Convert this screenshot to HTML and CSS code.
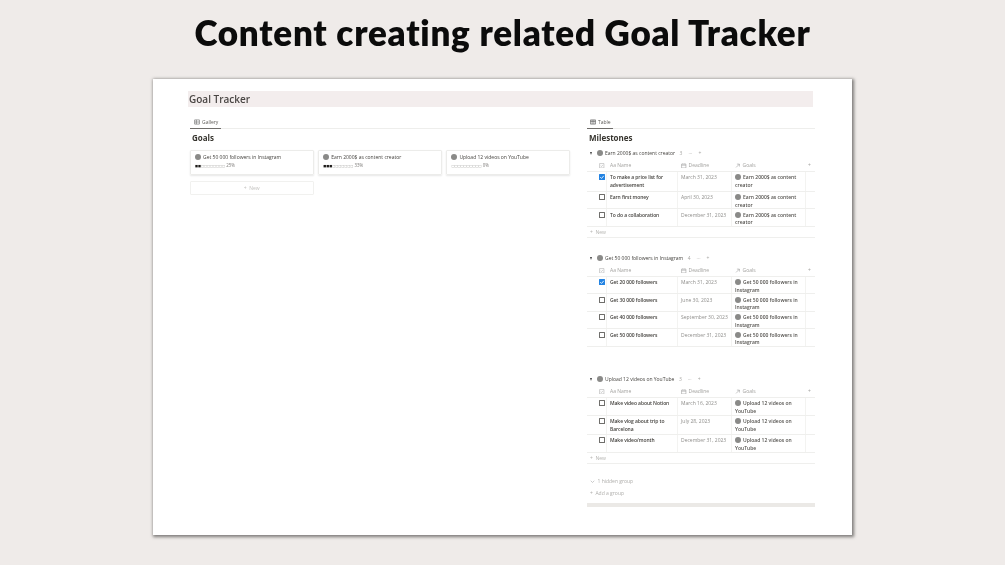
FILE: index.html
```html
<!DOCTYPE html>
<html lang="en">
<head>
<meta charset="utf-8">
<title>Goal Tracker</title>
<link rel="stylesheet" href="styles.css">
</head>
<body>
<h1 class="headline">Content creating related Goal Tracker</h1>
<main class="window">
  <div class="band">Goal Tracker</div>
  <div class="columns">
    <section class="left">
      <div class="tabs"><div class="tab tab-gallery">
        <svg class="ico" viewBox="0 0 10 10"><path d="M1 1.500h8v7H1zM1 5h8M4 1.500v7" fill="none" stroke="#666" stroke-width="1"/></svg>Gallery</div></div>
      <h2 class="view-title">Goals</h2>
      <div class="cards">
        <article class="card">
          <div class="card-name"><span class="dot"></span>Get 50 000 followers in Instagram</div>
          <div class="progress"><span class="dark">■■</span><span class="light">□□□□□□□□</span> 25%</div>
        </article>
        <article class="card">
          <div class="card-name"><span class="dot"></span>Earn 2000$ as content creator</div>
          <div class="progress"><span class="dark">■■■</span><span class="light">□□□□□□□</span> 33%</div>
        </article>
        <article class="card">
          <div class="card-name"><span class="dot"></span>Upload 12 videos on YouTube</div>
          <div class="progress"><span class="light">□□□□□□□□□□</span> 0%</div>
        </article>
        <div class="card-new">+ &nbsp;New</div>
      </div>
    </section>

    <section class="right">
      <div class="tabs"><div class="tab tab-table">
        <svg class="ico" viewBox="0 0 10 10"><path d="M.8 1.500h8.400v7H.8zM.8 4h8.400M3.500 1.500v7M6.500 1.500v7" fill="none" stroke="#555" stroke-width="1"/></svg>Table</div></div>
      <h2 class="view-title">Milestones</h2>

      <div class="group g1">
        <div class="group-head"><span class="tri"></span><span class="dot"></span><span class="gname">Earn 2000$ as content creator</span><span class="meta"><span>3</span><span>···</span><span>+</span></span></div>
        <div class="row head">
          <div class="c0"><svg class="chk-h" viewBox="0 0 10 10"><path d="M1 1h8v8H1zM3 5l1.500 1.500L7 3.500" fill="none" stroke="#aaa"/></svg></div>
          <div class="c1">Aa Name</div>
          <div class="c2"><svg class="ico-h" viewBox="0 0 10 10"><path d="M1 2h8v7H1zM1 4h8M3 1v1M7 1v1" fill="none" stroke="#999"/></svg>Deadline</div>
          <div class="c3"><svg class="ico-h" viewBox="0 0 10 10"><path d="M2 8l6-6M3.500 2H8v4.500" fill="none" stroke="#999"/></svg>Goals</div>
          <div class="c4 plus">+</div>
        </div>
        <div class="row tall">
          <div class="c0"><span class="box on"><svg viewBox="0 0 10 10"><path d="M2 5.200l2.200 2.200L8 3" fill="none" stroke="#fff" stroke-width="1.400"/></svg></span></div>
          <div class="c1 name">To make a price list for advertisement</div>
          <div class="c2 date">March 31, 2023</div>
          <div class="c3 goal"><span class="dot"></span>Earn 2000$ as content creator</div>
          <div class="c4"></div>
        </div>
        <div class="row">
          <div class="c0"><span class="box"></span></div>
          <div class="c1 name">Earn first money</div>
          <div class="c2 date">April 30, 2023</div>
          <div class="c3 goal"><span class="dot"></span>Earn 2000$ as content creator</div>
          <div class="c4"></div>
        </div>
        <div class="row">
          <div class="c0"><span class="box"></span></div>
          <div class="c1 name">To do a collaboration</div>
          <div class="c2 date">December 31, 2023</div>
          <div class="c3 goal"><span class="dot"></span>Earn 2000$ as content creator</div>
          <div class="c4"></div>
        </div>
        <div class="row-new">+ &nbsp;New</div>
      </div>

      <div class="group g2">
        <div class="group-head"><span class="tri"></span><span class="dot"></span><span class="gname">Get 50 000 followers in Instagram</span><span class="meta"><span>4</span><span>···</span><span>+</span></span></div>
        <div class="row head">
          <div class="c0"><svg class="chk-h" viewBox="0 0 10 10"><path d="M1 1h8v8H1zM3 5l1.500 1.500L7 3.500" fill="none" stroke="#aaa"/></svg></div>
          <div class="c1">Aa Name</div>
          <div class="c2"><svg class="ico-h" viewBox="0 0 10 10"><path d="M1 2h8v7H1zM1 4h8M3 1v1M7 1v1" fill="none" stroke="#999"/></svg>Deadline</div>
          <div class="c3"><svg class="ico-h" viewBox="0 0 10 10"><path d="M2 8l6-6M3.500 2H8v4.500" fill="none" stroke="#999"/></svg>Goals</div>
          <div class="c4 plus">+</div>
        </div>
        <div class="row">
          <div class="c0"><span class="box on"><svg viewBox="0 0 10 10"><path d="M2 5.200l2.200 2.200L8 3" fill="none" stroke="#fff" stroke-width="1.400"/></svg></span></div>
          <div class="c1 name">Get 20 000 followers</div>
          <div class="c2 date">March 31, 2023</div>
          <div class="c3 goal"><span class="dot"></span>Get 50 000 followers in Instagram</div>
          <div class="c4"></div>
        </div>
        <div class="row">
          <div class="c0"><span class="box"></span></div>
          <div class="c1 name">Get 30 000 followers</div>
          <div class="c2 date">June 30, 2023</div>
          <div class="c3 goal"><span class="dot"></span>Get 50 000 followers in Instagram</div>
          <div class="c4"></div>
        </div>
        <div class="row">
          <div class="c0"><span class="box"></span></div>
          <div class="c1 name">Get 40 000 followers</div>
          <div class="c2 date">September 30, 2023</div>
          <div class="c3 goal"><span class="dot"></span>Get 50 000 followers in Instagram</div>
          <div class="c4"></div>
        </div>
        <div class="row">
          <div class="c0"><span class="box"></span></div>
          <div class="c1 name">Get 50 000 followers</div>
          <div class="c2 date">December 31, 2023</div>
          <div class="c3 goal"><span class="dot"></span>Get 50 000 followers in Instagram</div>
          <div class="c4"></div>
        </div>
      </div>

      <div class="group g3">
        <div class="group-head"><span class="tri"></span><span class="dot"></span><span class="gname">Upload 12 videos on YouTube</span><span class="meta"><span>3</span><span>···</span><span>+</span></span></div>
        <div class="row head">
          <div class="c0"><svg class="chk-h" viewBox="0 0 10 10"><path d="M1 1h8v8H1zM3 5l1.500 1.500L7 3.500" fill="none" stroke="#aaa"/></svg></div>
          <div class="c1">Aa Name</div>
          <div class="c2"><svg class="ico-h" viewBox="0 0 10 10"><path d="M1 2h8v7H1zM1 4h8M3 1v1M7 1v1" fill="none" stroke="#999"/></svg>Deadline</div>
          <div class="c3"><svg class="ico-h" viewBox="0 0 10 10"><path d="M2 8l6-6M3.500 2H8v4.500" fill="none" stroke="#999"/></svg>Goals</div>
          <div class="c4 plus">+</div>
        </div>
        <div class="row">
          <div class="c0"><span class="box"></span></div>
          <div class="c1 name">Make video about Notion</div>
          <div class="c2 date">March 16, 2023</div>
          <div class="c3 goal"><span class="dot"></span>Upload 12 videos on YouTube</div>
          <div class="c4"></div>
        </div>
        <div class="row mid">
          <div class="c0"><span class="box"></span></div>
          <div class="c1 name">Make vlog about trip to Barcelona</div>
          <div class="c2 date">July 28, 2023</div>
          <div class="c3 goal"><span class="dot"></span>Upload 12 videos on YouTube</div>
          <div class="c4"></div>
        </div>
        <div class="row">
          <div class="c0"><span class="box"></span></div>
          <div class="c1 name">Make video/month</div>
          <div class="c2 date">December 31, 2023</div>
          <div class="c3 goal"><span class="dot"></span>Upload 12 videos on YouTube</div>
          <div class="c4"></div>
        </div>
        <div class="row-new short">+ &nbsp;New</div>
      </div>

      <div class="foot first"><svg class="chev" viewBox="0 0 10 10"><path d="M1.500 3.500L5 7l3.500-3.500" fill="none" stroke="#aaa" stroke-width="1.200"/></svg>1 hidden group</div>
      <div class="foot">+ &nbsp;Add a group</div>
      <div class="scrollbar"></div>
    </section>
  </div>
</main>
</body>
</html>
```

FILE: styles.css
```css
* { box-sizing: border-box; }
html, body { margin: 0; height: 100%; }
body {
  width: 1005px;
  height: 565px;
  overflow: hidden;
  background: #efebe9;
  font-family: "Open Sans", "Liberation Sans", sans-serif;
  color: #37352f;
}
.headline {
  margin: 0;
  height: 79px;
  padding-top: 10px;
  text-align: center;
  font-family: Lato, "Liberation Sans", sans-serif;
  font-size: 35px;
  line-height: 44px;
  font-weight: 800;
  letter-spacing: 0.75px;
  color: #0b0b0b;
  filter: blur(0.3px);
}
.window {
  width: 699px;
  height: 456px;
  margin-left: 153px;
  padding: 12px 37px 0 35px;
  background: #fff;
  box-shadow: 1px 1px 3px 1px #7d7b79;
  overflow: hidden;
}
.band {
  width: 625px;
  height: 16px;
  background: #f3eded;
  font-size: 10px;
  line-height: 17px;
  font-weight: 600;
  color: #4a4644;
  padding-left: 1px;
  filter: blur(0.3px);
}
.columns {
  display: flex;
  gap: 17px;
  padding-left: 2px;
  margin-top: 9px;
  filter: blur(0.4px);
}
.left { width: 380px; flex: none; }
.right { width: 228px; flex: none; }
.tabs {
  height: 13px;
  border-bottom: 1px solid #eeeeec;
}
.tab {
  height: 13px;
  border-bottom: 1px solid #6f6d6a;
  font-size: 5px;
  line-height: 11px;
  color: #5f5d59;
  display: flex;
  align-items: center;
}
.tab-gallery { width: 31px; padding-left: 4px; }
.tab-table { width: 26px; padding-left: 3px; }
.ico { width: 6px; height: 6px; margin-right: 2px; }
.view-title {
  margin: 3px 0 0 2px;
  font-size: 8px;
  line-height: 12px;
  font-weight: 700;
  color: #37352f;
}
.cards {
  display: grid;
  grid-template-columns: repeat(3, 123.500px);
  gap: 6px 4.700px;
  margin-top: 6px;
}
.card {
  height: 25px;
  border: 1px solid #ececea;
  border-radius: 1px;
  box-shadow: 0 1px 2px rgba(15, 15, 15, .10);
  padding: 2.500px 4px;
}
.card-name {
  display: flex;
  align-items: center;
  font-size: 5px;
  line-height: 7px;
  color: #45433f;
}
.dot {
  width: 6px;
  height: 6px;
  border-radius: 50%;
  background: #8a8a88;
  flex: none;
  display: inline-block;
}
.card-name .dot { margin-right: 2px; }
.progress {
  font-size: 4.400px;
  line-height: 7px;
  margin-top: 1.500px;
  color: #7d7b78;
  white-space: nowrap;
}
.progress span { font-family: "DejaVu Sans", sans-serif; font-size: 3.200px; }
.progress .dark { color: #1e1c1a; }
.progress .light { color: #9b9a97; }
.card-new {
  height: 14px;
  border: 1px solid #f1f1ef;
  border-radius: 1px;
  font-size: 5px;
  line-height: 12px;
  text-align: center;
  color: #c4c3c0;
}
.group-head {
  display: flex;
  align-items: center;
  height: 8px;
  font-size: 5px;
  line-height: 8px;
  color: #45433f;
  padding-left: 3px;
}
.tri {
  width: 0;
  height: 0;
  border-left: 1.500px solid transparent;
  border-right: 1.500px solid transparent;
  border-top: 3px solid #444;
  margin-right: 5px;
}
.group-head .dot { margin-right: 2px; }
.meta { display: flex; gap: 6px; margin-left: 4.500px; color: #a8a7a4; white-space: nowrap; }
.g1 { margin-top: 5px; }
.g2 { margin-top: 16px; }
.g3 { margin-top: 28.500px; }
.row {
  display: grid;
  grid-template-columns: 20px 71px 54px 74px 9px;
  height: 17.500px;
  border-bottom: 1px solid #efefed;
  font-size: 5px;
  line-height: 7.600px;
}
.row.tall { height: 20px; }
.g3 .row { height: 18px; }
.g3 .row.mid { height: 19px; }
.row.head,
.g3 .row.head {
  height: 14.500px;
  padding-top: 4.500px;
  color: #a3a29f;
  line-height: 7px;
}
.row > div { padding: 2.500px 3px 0; overflow: hidden; }
.row.head > div { padding-top: 0; display: flex; align-items: flex-start; }
.row:not(.head) > .c1,
.row:not(.head) > .c2,
.row:not(.head) > .c3 { border-right: 1px solid #f3f3f1; }
.row:not(.head) > .c0 { border-right: 1px solid #f3f3f1; padding: 2.500px 0 0 12px; }
.row.head > .c0 { padding: 0 0 0 12px; }
.chk-h { width: 5.500px; height: 5.500px; margin-top: 1px; }
.ico-h { width: 5.500px; height: 5.500px; margin: 1px 2px 0 0; flex: none; }
.plus { padding-left: 2px !important; }
.box {
  display: block;
  width: 6px;
  height: 6px;
  border: 1px solid #6f6e6b;
  border-radius: .5px;
}
.box.on { border: 0; background: #2383e2; }
.box svg { display: block; width: 6px; height: 6px; }
.name { font-weight: 600; color: #45433f; letter-spacing: -0.080px; }
.date { color: #8f8e8b; }
.goal { color: #55534f; font-weight: 600; }
.goal .dot { margin-right: 2px; vertical-align: -1px; }
.row-new {
  height: 11.500px;
  border-bottom: 1px solid #efefed;
  font-size: 5px;
  line-height: 11px;
  color: #b4b3b0;
  padding-left: 3px;
}
.row-new.short { height: 11px; }
.foot {
  font-size: 5px;
  line-height: 7px;
  color: #aeadaa;
  padding-left: 3px;
  margin-top: 5px;
  display: flex;
  align-items: center;
}
.foot.first { margin-top: 14.500px; }
.chev { width: 5px; height: 5px; margin-right: 2.500px; }
.scrollbar {
  height: 4px;
  margin-top: 5.500px;
  background: #ebe9e6;
}
```
